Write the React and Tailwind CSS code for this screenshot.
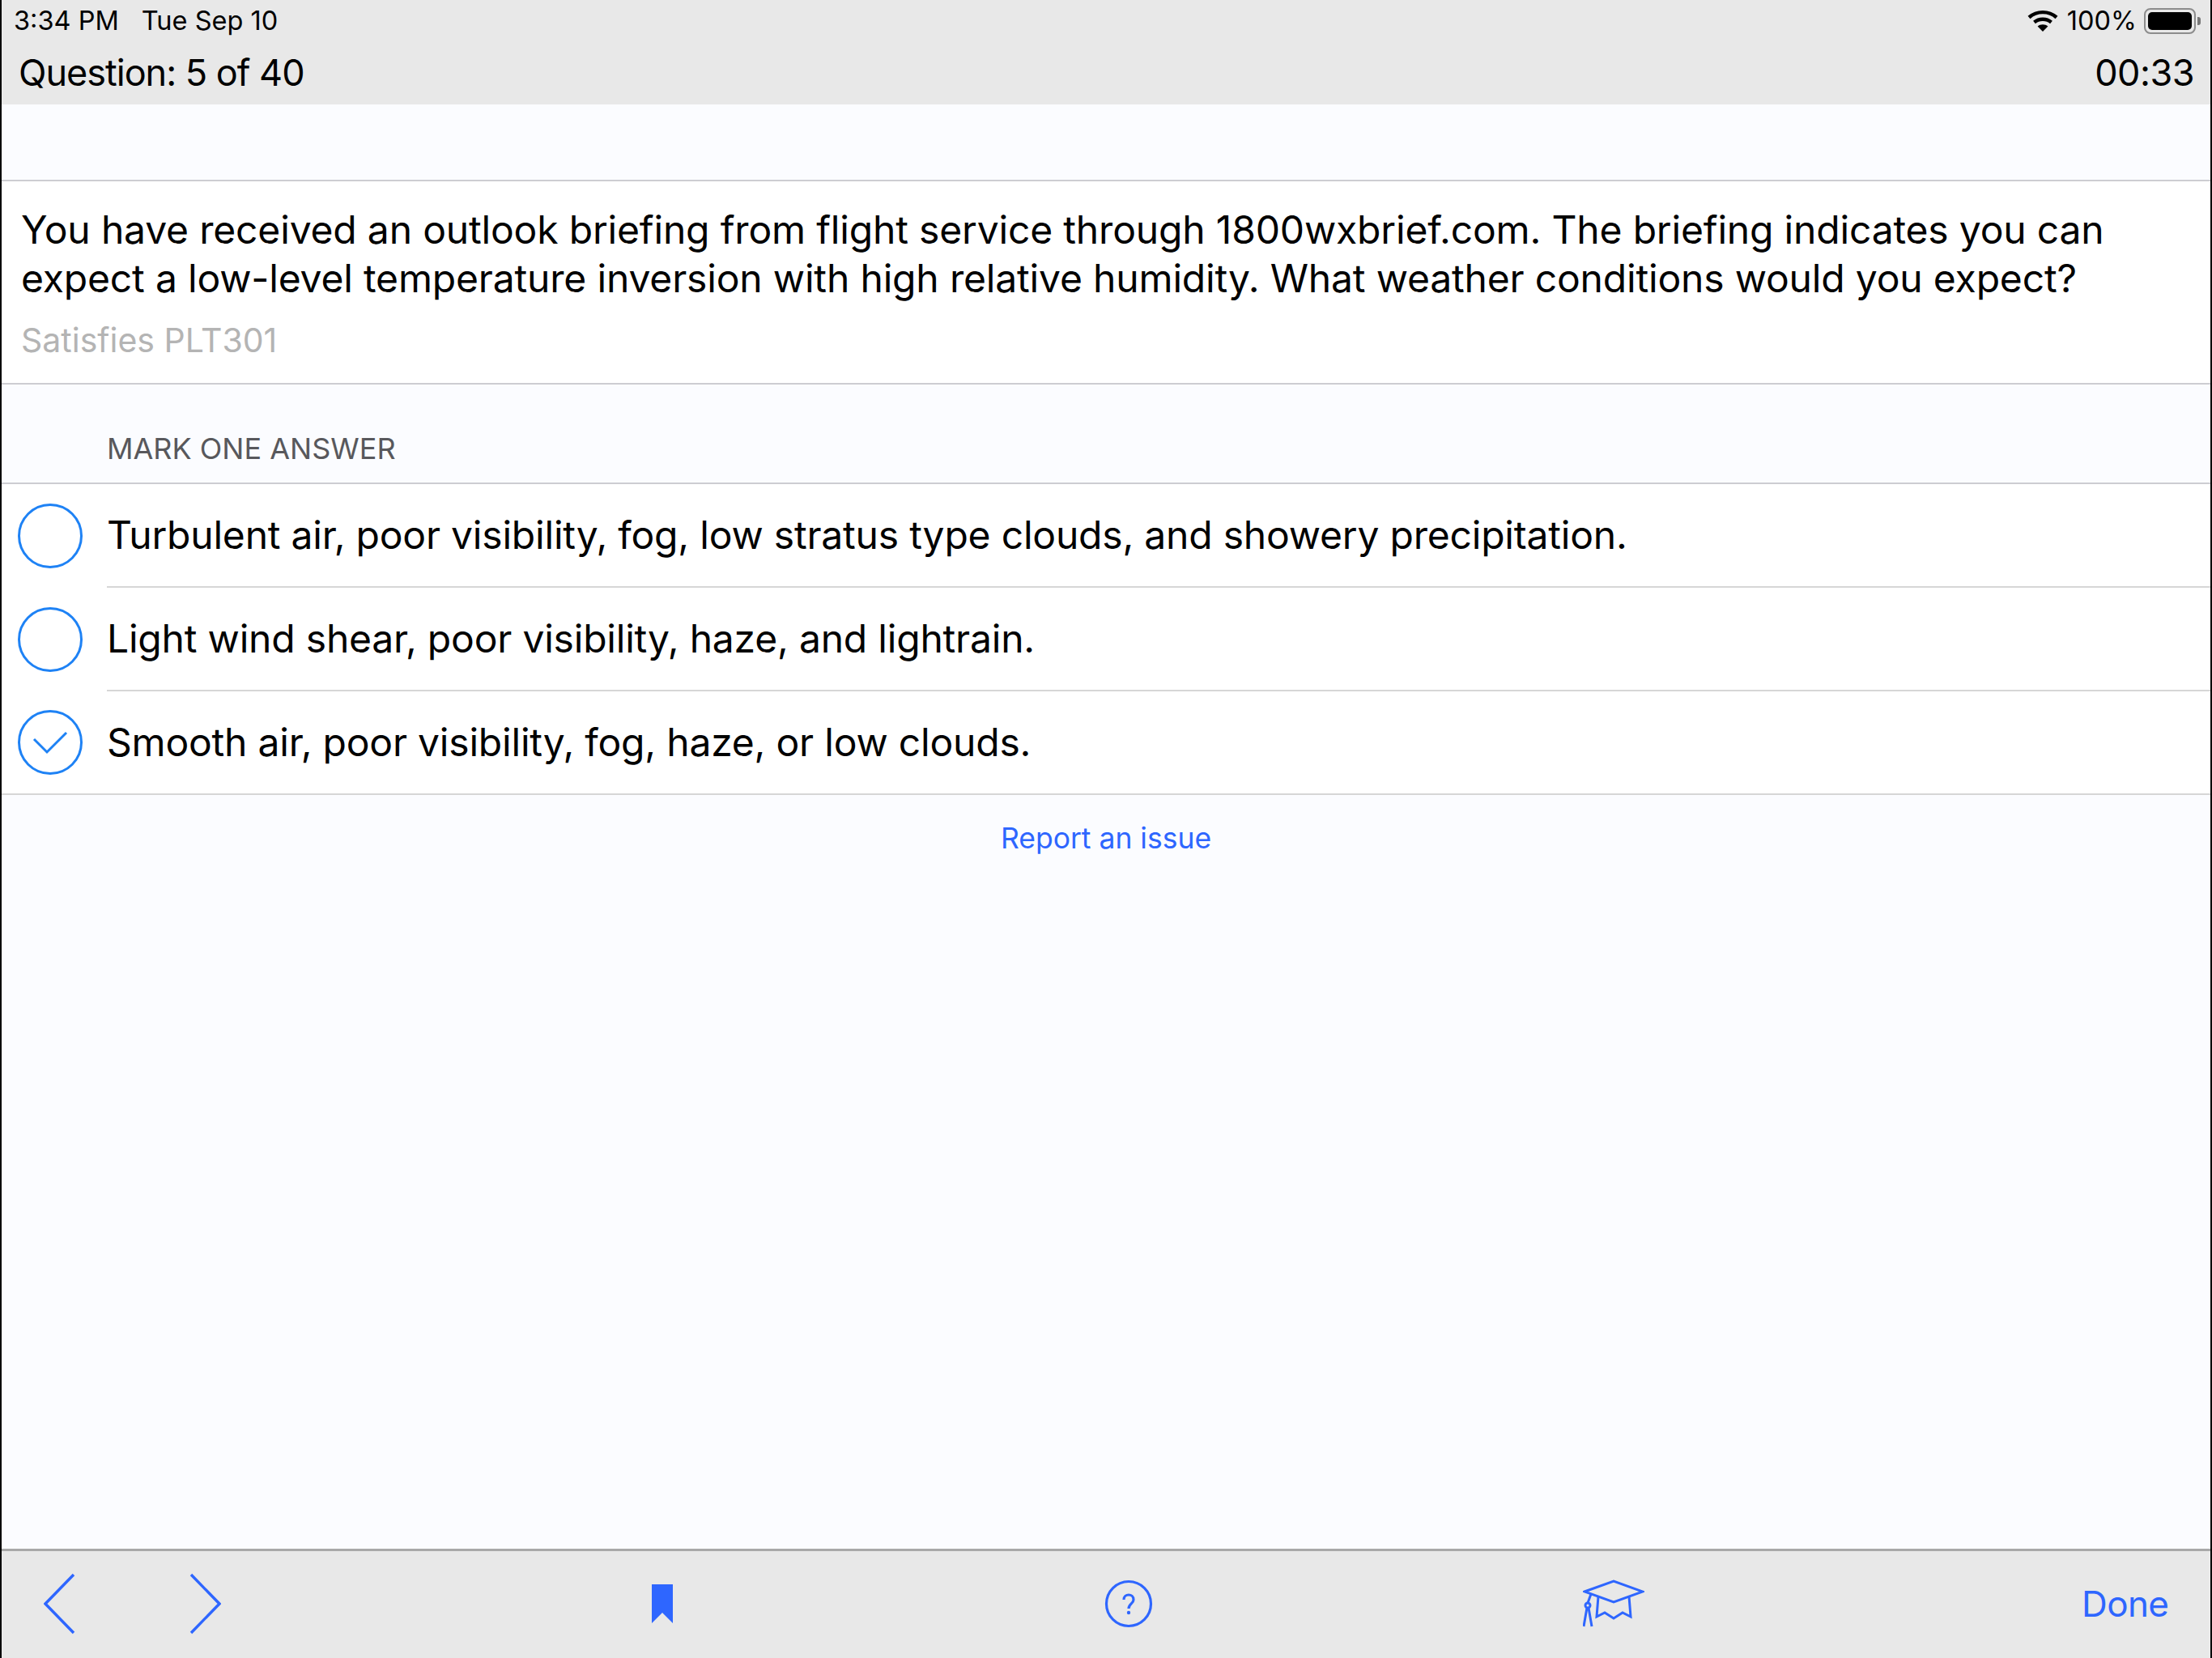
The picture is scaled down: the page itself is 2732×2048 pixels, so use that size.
import React from "react";

const FONT = "font-['Inter','Liberation_Sans',sans-serif]";

const answers = [
  { text: "Turbulent air, poor visibility, fog, low stratus type clouds, and showery precipitation." },
  { text: "Light wind shear, poor visibility, haze, and lightrain." },
  { text: "Smooth air, poor visibility, fog, haze, or low clouds.", checked: true },
];

/* ---------- Status bar icons ---------- */
function WifiIcon() {
  return (
    <svg width="38" height="28" viewBox="0 0 38 28" fill="none" stroke="#000" strokeWidth="4.4">
      <path d="M2 9.5C11.5 1 26.5 1 36 9.5" />
      <path d="M8.5 15.5C14.5 10.5 23.5 10.5 29.5 15.5" />
      <path d="M19 27L12.6 20.5C16 17.6 22 17.6 25.4 20.5Z" fill="#000" stroke="none" />
    </svg>
  );
}

function BatteryIcon() {
  return (
    <div className="flex items-center">
      <div className="w-[64px] h-[32px] rounded-[8px] border-[2px] border-[#8c8c8c] p-[3px]">
        <div className="w-full h-full bg-black rounded-[5px]" />
      </div>
      <div className="w-[4px] h-[10px] bg-[#777] rounded-r-[3px] ml-[2px]" />
    </div>
  );
}

/* ---------- Answer row ---------- */
function AnswerRow({ text, checked, last }) {
  return (
    <div className={`flex ${last ? "h-[126px]" : "h-[128px]"}`}>
      <div className="w-[130px] shrink-0 flex items-center pl-[20px]">
        <svg width="80" height="80" viewBox="0 0 80 80" fill="none" stroke="#1e82f5">
          <circle cx="40" cy="40" r="38.5" strokeWidth="3" />
          {checked && <path d="M20 36L36 52L60 28" strokeWidth="3" />}
        </svg>
      </div>
      <div className={`flex-1 flex items-center text-[48px] text-black tracking-[-0.2px] ${last ? "" : "border-b-2 border-[#d6d6d6]"}`}>
        {text}
      </div>
    </div>
  );
}

/* ---------- Bottom toolbar icons ---------- */
function Chevron({ dir }) {
  return (
    <svg width="40" height="76" viewBox="0 0 40 76" fill="none" stroke="#2e66ff" strokeWidth="3.4">
      <path d={dir === "left" ? "M37 2L2 38L37 74" : "M3 2L38 38L3 74"} />
    </svg>
  );
}

function GradCap() {
  return (
    <svg width="76" height="60" viewBox="0 0 76 60" fill="none" stroke="#2e66ff" strokeWidth="3">
      <path d="M2 15L38 2L74 15L38 28Z" />
      <path d="M19 21L17 46L27 41L38 48L49 41L59 46L57 21" />
      <path d="M10 18L6 29" />
      <circle cx="6" cy="32" r="3" />
      <path d="M5 35L1 58M7 35L11 58" />
    </svg>
  );
}

export default function App() {
  return (
    <div className={`${FONT} w-[2732px] h-[2048px] flex flex-col bg-[#fbfcff] border-x-[2px] border-black overflow-hidden`}>
      {/* header */}
      <header className="h-[129px] shrink-0 bg-[#e8e8e8] flex flex-col text-black">
        <div className="h-[52px] flex items-center justify-between pl-[15px] pr-[12px] text-[32.5px]">
          <div className="flex gap-[28px]">
            <span>3:34 PM</span>
            <span>Tue Sep 10</span>
          </div>
          <div className="flex items-center">
            <WifiIcon />
            <span className="ml-[11px]">100%</span>
            <div className="ml-[9px]"><BatteryIcon /></div>
          </div>
        </div>
        <div className="flex-1 flex items-start justify-between pl-[21px] pr-[20px] pt-[3px] text-[45px] leading-[70px]">
          <span className="tracking-[-1px]">Question: 5 of 40</span>
          <span className="tracking-[-0.5px]">00:33</span>
        </div>
      </header>

      <div className="h-[95px] shrink-0 border-b-2 border-[#cdcdd2]" />

      {/* question */}
      <section className="h-[251px] shrink-0 bg-white border-b-2 border-[#cdcdd2] px-[24px] pt-[30px]">
        <p className="text-[48px] leading-[60px] text-black tracking-[-0.17px]">
          You have received an outlook briefing from flight service through 1800wxbrief.com. The briefing indicates you can expect a low-level temperature inversion with high relative humidity. What weather conditions would you expect?
        </p>
        <p className="mt-[20px] text-[41px] leading-[52px] text-[#b4b4b4]">Satisfies PLT301</p>
      </section>

      <div className="h-[123px] shrink-0 flex items-end pl-[130px] pb-[20px] text-[36px] leading-[44px] text-[#58585c] border-b-2 border-[#cdcdd2]">
        MARK ONE ANSWER
      </div>

      {/* answers */}
      <section className="shrink-0 bg-white border-b-2 border-[#d6d6d6]">
        {answers.map((a, i) => (
          <AnswerRow key={a.text} text={a.text} checked={a.checked} last={i === answers.length - 1} />
        ))}
      </section>

      <div className="flex justify-center pt-[29px] text-[35.5px] leading-[50px] text-[#2e66ff]">Report an issue</div>

      {/* toolbar */}
      <footer className="mt-auto h-[135px] shrink-0 bg-[#e8e8e8] border-t-[3px] border-[#a8a8a8] flex items-center pl-[52px] pb-[3px] text-[#2e66ff]">
        <Chevron dir="left" />
        <div className="ml-[139px]"><Chevron dir="right" /></div>
        <svg className="ml-[531px]" width="28" height="50" viewBox="0 0 28 50" fill="#2e66ff">
          <path d="M1 1H27V49L14 36L1 49Z" />
        </svg>
        <svg className="ml-[532px]" width="60" height="60" viewBox="0 0 60 60" fill="none" stroke="#2e66ff" strokeWidth="3.2">
          <circle cx="30" cy="30" r="27.5" />
          <path d="M24 25C24 17 36 17 36 25C36 30 30 30 30 36" strokeWidth="3.2" />
          <circle cx="30" cy="41" r="2.2" fill="#2e66ff" stroke="none" />
        </svg>
        <div className="ml-[531px]"><GradCap /></div>
        <span className="ml-[540px] text-[44px] tracking-[-0.6px]">Done</span>
      </footer>
    </div>
  );
}
